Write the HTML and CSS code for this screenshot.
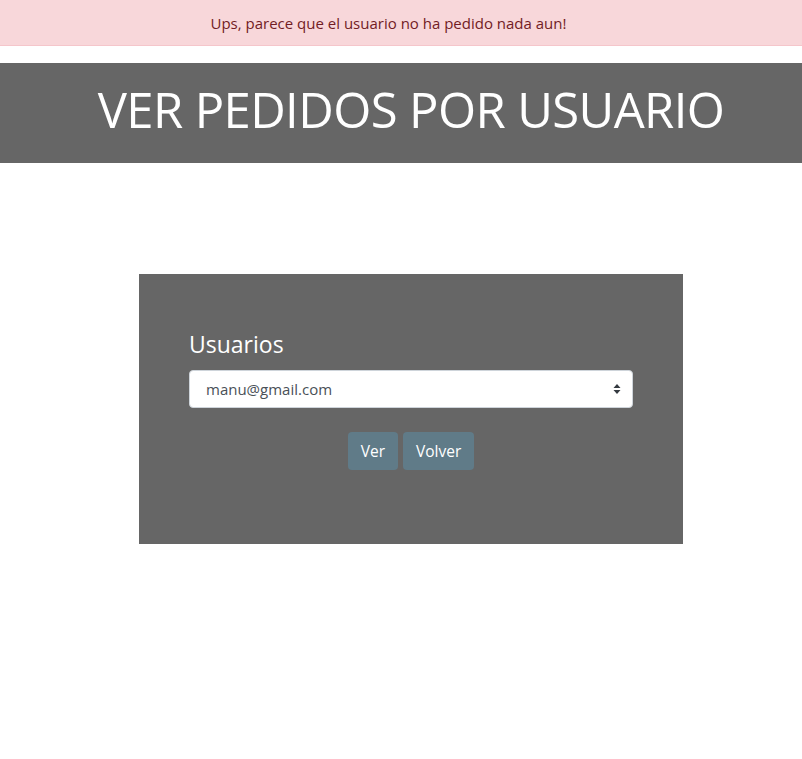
FILE: index.html
```html
<!DOCTYPE html>
<html lang="es">
<head>
<meta charset="utf-8">
<title>Ver pedidos por usuario</title>
<link rel="stylesheet" href="styles.css">
</head>
<body>
<div class="alert">Ups, parece que el usuario no ha pedido nada aun!</div>
<header class="banner"><h1>VER PEDIDOS POR USUARIO</h1></header>
<main class="wrap">
  <form class="card">
    <label class="label" for="usr">Usuarios</label>
    <div class="select" id="usr">
      <span>manu@gmail.com</span>
      <svg class="caret" width="8" height="12" viewBox="0 0 8 12"><path d="M4 1 L7.5 5 H0.5 Z M4 11 L0.5 7 H7.5 Z" fill="#343a40"/></svg>
    </div>
    <div class="actions">
      <button type="button" class="btn">Ver</button>
      <button type="button" class="btn">Volver</button>
    </div>
  </form>
</main>
</body>
</html>
```
FILE: styles.css
```css
* { box-sizing: border-box; }
body {
  margin: 0;
  font-family: "Open Sans", "Noto Sans", sans-serif;
  background: #fff;
}
.alert {
  height: 46px;
  background: #f8d7da;
  border-bottom: 1px solid #f5c6cb;
  color: #721c24;
  font-size: 15px;
  display: flex;
  align-items: center;
  justify-content: center;
  padding-right: 25px;
}
.banner {
  margin-top: 17px;
  height: 100px;
  background: #666;
  display: flex;
  align-items: center;
  justify-content: center;
  padding-left: 20px;
  padding-bottom: 8px;
}
.banner h1 {
  margin: 0;
  color: #fff;
  font-weight: 400;
  font-size: 49px;
  letter-spacing: -0.6px;
}
.wrap {
  display: flex;
  justify-content: center;
  padding-top: 111px;
  padding-left: 20px;
}
.card {
  width: 544px;
  height: 270px;
  background: #666;
  padding: 54px 50px 0;
  display: flex;
  flex-direction: column;
}
.label {
  color: #fff;
  font-size: 23px;
  line-height: 32px;
  margin-bottom: 10px;
}
.select {
  height: 38px;
  background: #fff;
  border: 1px solid #ced4da;
  border-radius: 4px;
  display: flex;
  align-items: center;
  justify-content: space-between;
  padding: 0 11px 0 16px;
  color: #495057;
  font-size: 15px;
}
.actions {
  display: flex;
  justify-content: center;
  gap: 5px;
  margin-top: 24px;
}
.btn {
  height: 38px;
  padding: 0 13px;
  border: 0;
  border-radius: 4px;
  background: #607b88;
  color: #fff;
  font-family: inherit;
  font-size: 15.5px;
}
```
